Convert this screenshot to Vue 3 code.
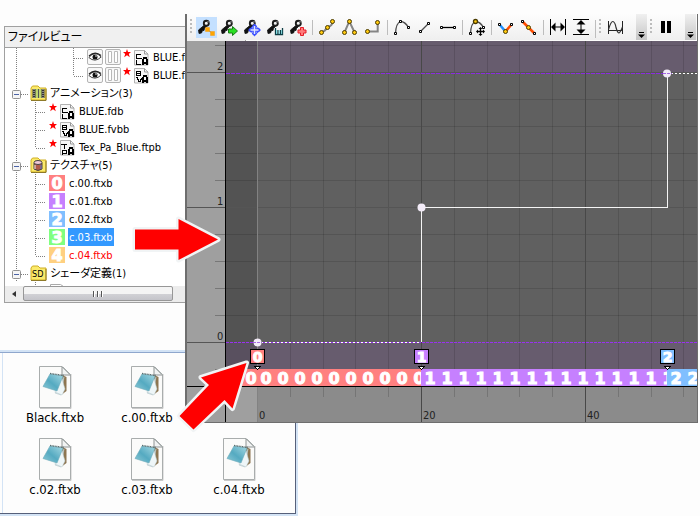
<script setup>
import { computed, onBeforeUnmount, onMounted, ref } from 'vue'

const treeRows = [
  { kind: 'deep', icon: 'C', label: 'BLUE.fdb' },
  { kind: 'deep', icon: 'V', last: true, label: 'BLUE.fvbb' },
  { kind: 'folder', icon: 'film', label: 'アニメーション(3)' },
  { kind: 'child', icon: 'C', label: 'BLUE.fdb' },
  { kind: 'child', icon: 'V', label: 'BLUE.fvbb' },
  { kind: 'child', icon: 'T', last: true, label: 'Tex_Pa_Blue.ftpb' },
  { kind: 'folder', icon: 'can', label: 'テクスチャ(5)' },
  { kind: 'child', digit: 0, label: 'c.00.ftxb' },
  { kind: 'child', digit: 1, label: 'c.01.ftxb' },
  { kind: 'child', digit: 2, label: 'c.02.ftxb' },
  { kind: 'child', digit: 3, label: 'c.03.ftxb', selected: true },
  { kind: 'child', digit: 4, last: true, missing: true, label: 'c.04.ftxb' },
  { kind: 'folder', icon: 'sd', label: 'シェーダ定義(1)' }
]
const guideWidth = { deep: 81, folder: 24, child: 43 }
const tileColors = ['#ff8080', '#c680ff', '#80bfff', '#80ff80', '#ffd080']

const files = ['Black.ftxb', 'c.00.ftxb', 'c.02.ftxb', 'c.03.ftxb', 'c.04.ftxb']

const keyTools = ['Insert key', 'Shift key', 'Move key', 'Scale key', 'Add key']
const slots = [
  ['Smooth', 'Linear', 'Step'],
  ['Ease', 'Slope', 'Flat'],
  ['Move tangent'],
  ['Break', 'Unify'],
  ['Fit width', 'Fit height']
]

/* chart geometry: frame 0 and value 0 in chart pixels */
const frame0 = 70
const value0 = 301
const fx = (frame) => Math.round(frame0 + frame * 8.2) + 0.5
const vy = (value) => value0 - value * 135 + 0.5
const minorFrames = [4, 8, 12, 16, 24, 28, 32, 36, 44, 48, 52]
const majorFrames = [20, 40]
const minorValues = [-0.2, 0.2, 0.4, 0.6, 0.8, 1.2, 1.4, 1.6, 1.8, 2.2]
const keys = [
  { frame: 0, digit: 0 },
  { frame: 20, digit: 1 },
  { frame: 50, digit: 2 }
]

/* the last band runs on to the right edge of the chart */
const chart = ref(null)
const chartWidth = ref(510)
const measure = () => { chartWidth.value = chart.value.clientWidth || 510 }
onMounted(() => {
  measure()
  window.addEventListener('resize', measure)
})
onBeforeUnmount(() => window.removeEventListener('resize', measure))
const bands = computed(() => [
  { x: 39, digit: 0, offset: 8, count: 2 },
  { x: 70, digit: 0, offset: 9, count: 10 },
  { x: 234, digit: 1, offset: 9, count: 15 },
  { x: 480, digit: 2, offset: 9, count: Math.max(0, Math.ceil((chartWidth.value - 480) / 17)) }
])
</script>

<template>
  <main class="desk">
    <section class="explorer" aria-label="Files">
      <ul class="files">
        <li v-for="f in files" :key="f" class="file">
          <svg width="34" height="43" viewBox="0 0 34 43" aria-hidden="true">
            <defs>
              <linearGradient id="pad" x1="0" y1="1" x2="1" y2="0">
                <stop offset="0" stop-color="#8fcbd8" /><stop offset=".45" stop-color="#55aac1" /><stop offset="1" stop-color="#a8dae4" />
              </linearGradient>
            </defs>
            <path d="M2 42.500h31V8" fill="none" stroke="#c9c9c9" />
            <path d="M1.500.5H24L32.500 9V41.500H1.500z" fill="#fbfbfa" stroke="#a9adad" />
            <path d="M24 .5V9h8.500" fill="#f1f3f3" stroke="#8f9494" />
            <path d="M24.500 1L32 8.500" stroke="#77807f" />
            <path d="M24 9l4.500 2v14l-4 3z" fill="#8d7550" />
            <path d="M26 11l-3 18-6-2z" fill="#d9e8ec" stroke="#b5c6ca" stroke-width=".6" />
            <path d="M23.500 11l3.500 12-3 6-7-3z" fill="#eef6f8" stroke="#b5c6ca" stroke-width=".5" />
            <path d="M12 8l13 2-6 15L5 20.500z" fill="url(#pad)" stroke="#6ba9b8" stroke-width=".6" />
            <path d="M12 7.500l14 2" stroke="#596b6d" stroke-width="1.400" stroke-dasharray="1 .6" />
          </svg>
          <span>{{ f }}</span>
        </li>
      </ul>
    </section>

    <section class="tree-panel">
      <h2>ファイルビュー</h2>
      <ul class="tree">
        <li v-for="(r, i) in treeRows" :key="i" class="row">
          <svg class="guide" :width="guideWidth[r.kind]" height="18" aria-hidden="true">
            <g stroke="#808080" stroke-dasharray="1 1" shape-rendering="crispEdges">
              <path d="M11.500 0V18" />
              <path v-if="r.kind === 'deep'" :d="r.last ? 'M68.500 0V10' : 'M68.500 0V18'" />
              <path v-if="r.kind === 'deep'" d="M69 10.500H79" />
              <path v-if="r.kind === 'child'" :d="r.last ? 'M30.500 0V10' : 'M30.500 0V18'" />
              <path v-if="r.kind === 'child'" d="M31 10.500H41" />
              <path v-if="r.kind === 'folder'" d="M16 10.500H23" />
            </g>
            <g v-if="r.kind === 'folder'">
              <rect x="7.500" y="6.500" width="8" height="8" rx="1" fill="#f5f5f5" stroke="#919191" />
              <path d="M9 10.500H14" stroke="#4b63a7" />
            </g>
          </svg>

          <template v-if="r.kind === 'deep'">
            <button class="mini" aria-label="Show">
              <svg width="14" height="12" viewBox="0 0 14 12">
                <path d="M.8 6.500Q7-1 13.200 6Q7 12 .8 6.500z" fill="#fff" stroke="#333" stroke-width=".9" />
                <circle cx="7" cy="6" r="2.500" fill="#111" /><path d="M1 5Q7-.5 13 4.500" fill="none" stroke="#222" stroke-width="1.300" />
                <circle cx="8" cy="5" r=".8" fill="#fff" />
              </svg>
            </button>
            <button class="mini" aria-label="Pause">
              <svg width="12" height="12" viewBox="0 0 12 12">
                <path d="M1.500.5h3v11h-3zM7.500.5h3v11h-3z" fill="#fff" stroke="#b9b9b9" />
              </svg>
            </button>
          </template>

          <svg v-if="['C', 'V', 'T'].includes(r.icon)" class="marked" width="27" height="18" viewBox="0 0 27 18" aria-hidden="true">
            <path d="M5 1l1 3h3L6.800 6l1 3.200L5 7.200 2.200 9.200l1-3.200L1 4h3z" fill="#f00" />
            <path d="M12.500 2.500h10l3.500 3.500v11H12.500z" fill="#f7f7f7" stroke="#b2b2b2" />
            <path d="M22.500 2.500V6H26" fill="none" stroke="#999" />
            <g fill="none" stroke="#000" shape-rendering="crispEdges">
              <path v-if="r.icon === 'C'" d="M19 6.500h-4.500v4H20M14.500 12v4.500H19M14.500 13.500" />
              <path v-if="r.icon === 'V'" d="M14.500 5.500h4v4h-4zM14.500 7.500h4M14 11.500h1v2h1v2h2v-2h1v-2" />
              <path v-if="r.icon === 'T'" d="M13 6.500h6M16.500 6v5M14.500 17v-5h4v3h-4" />
              <path d="M21 17v-6M24.500 17v-6M21 14.500h4" stroke-width="2" />
              <path d="M21 9.500h4" stroke-width="2" />
            </g>
          </svg>

          <svg v-if="r.kind === 'folder'" class="folder" width="17" height="16" viewBox="0 0 17 16" aria-hidden="true">
            <path d="M1 15V3l1.500-2H8l2 2h6v12z" fill="#fbea6b" stroke="#cfae24" />
            <path d="M1 15.500h15V4" fill="none" stroke="#8e7a29" />
            <g v-if="r.icon === 'film'">
              <path d="M3 4h11v9H3z" fill="#bed66f" /><path d="M4 4v9M13 4v9" stroke="#333" stroke-width="3" /><path d="M4 4v9M13 4v9" stroke="#ddd" stroke-dasharray="1 1" /><path d="M8.500 4v9" stroke="#555" />
            </g>
            <g v-if="r.icon === 'can'">
              <path d="M4 6v6q4 3 8 0V6z" fill="#b05b4b" stroke="#444" /><ellipse cx="8" cy="5.500" rx="4" ry="2" fill="#f1c9d8" stroke="#444" /><path d="M5 8v4" stroke="#eee" /><path d="M11 8v4" stroke="#5a74c8" />
            </g>
            <text v-if="r.icon === 'sd'" x="2" y="12" class="sd">SD</text>
          </svg>

          <svg v-if="r.digit !== undefined" class="tile" width="16" height="16" aria-hidden="true">
            <rect width="16" height="16" :fill="tileColors[r.digit]" />
            <text x="8" y="14" class="digit">{{ r.digit }}</text>
          </svg>

          <span class="label" :class="{ selected: r.selected, missing: r.missing }">{{ r.label }}</span>
        </li>
        <li class="row stub" aria-hidden="true">
          <svg width="66" height="4"><path d="M30.500 0v4" stroke="#808080" stroke-dasharray="1 1" /><path d="M45.500 4V2.500h10l3 2" fill="none" stroke="#aaa" /></svg>
        </li>
      </ul>
      <div class="scroll">
        <button class="step" aria-label="Scroll left">
          <svg width="4" height="6" viewBox="0 0 4 6"><path d="M4 0v6L0 3z" fill="#333" /></svg>
        </button>
        <button class="thumb" aria-label="Scroll position"><i></i><i></i><i></i></button>
      </div>
    </section>

    <section class="editor" aria-label="Curve editor">
      <div class="toolbar">
        <span class="grip lead"></span>
        <button v-for="(t, i) in keyTools" :key="t" class="tool" :class="{ active: i === 0 }" :aria-label="t">
          <svg width="23" height="24" viewBox="0 0 23 24">
            <path d="M9.500 9L3.500 14l.5 3.500 2.500-.5 1-2.500 1.500 0 .5-2 2-2z" fill="#111" stroke="#111" stroke-width=".8" />
            <circle cx="11.300" cy="7.300" r="2.500" fill="#f2f2f2" stroke="#1c1c1c" stroke-width="1.900" />
            <path d="M12.500 5l1.500 1.500" stroke="#aaa" />
            <g v-if="i === 0"><path d="M12 13l6 5" stroke="#777" /><path d="M10.500 11.500h4v4h-4zM15.500 15.500h4v4h-4z" fill="#ffa500" stroke="#f39a12" stroke-width=".5" /></g>
            <path v-if="i === 1" d="M10.500 13h4v-2.500l5 4.500-5 4.500V17h-4z" fill="#2adf22" stroke="#187a16" />
            <g v-if="i === 2">
              <path d="M13.500 9v10M8.500 14h10" stroke="#3b4fff" stroke-width="3.500" /><path d="M13.500 7.500l3.500 4h-7zM13.500 20.500l3.500-4h-7zM7 14l4-3.500v7zM20 14l-4-3.500v7z" fill="#3b4fff" />
              <path d="M13.500 10v8M9.500 14h8" stroke="#dfe5ff" stroke-width="1.500" />
            </g>
            <g v-if="i === 3"><path d="M11.500 12v6.500h7V12M14 14v4M16.500 14v4" fill="none" stroke="#0d3d44" stroke-width="1.300" /><path d="M12.500 14v4M15.200 14v4M17.700 14v4" stroke="#5fe0e8" stroke-width=".7" /></g>
            <path v-if="i === 4" d="M13.500 11.500h3v2.500h2.500v3h-2.500v2.500h-3V17H11v-3h2.500z" fill="#ff7b7b" stroke="#e51d28" />
          </svg>
        </button>
        <template v-for="(group, g) in slots" :key="g">
          <span class="sep"></span>
          <button v-for="(t, i) in group" :key="t" class="tool" :aria-label="t">
            <svg width="23" height="24" viewBox="0 0 23 24" fill="none">
              <g v-if="g === 0" stroke="#858585" stroke-width="2">
                <path v-if="i === 0" d="M5.500 16.300Q9 15.500 11.300 11.300Q16.500 10 16.700 5.300" />
                <path v-if="i === 1" d="M5.500 16.300L10.300 5.300L15.500 16.300" />
                <path v-if="i === 2" d="M5.500 15.500H15.700V6.300" />
                <g fill="#ffc90e" stroke="#4a3b00" stroke-width="1">
                  <template v-if="i === 0"><circle cx="5.500" cy="16.500" r="2" /><circle cx="11.500" cy="11.500" r="2" /><circle cx="16.500" cy="5.500" r="2" /></template>
                  <template v-if="i === 1"><circle cx="5.500" cy="16.500" r="2" /><circle cx="10.500" cy="5.500" r="2" /><circle cx="15.500" cy="16.500" r="2" /></template>
                  <template v-if="i === 2"><circle cx="5.500" cy="15.500" r="2" /><circle cx="15.500" cy="6.500" r="2" /></template>
                </g>
              </g>
              <g v-if="g === 1 || g === 2" stroke="#4c4c4c" stroke-width="1.300">
                <path v-if="i === 0" d="M4.500 17.500Q5 7 9.500 5.500Q14 5.500 17.500 11.500" />
                <path v-if="i === 1" d="M6.500 15.500L14.500 7.500" />
                <path v-if="i === 2" d="M4.500 11.500H17.500" stroke="#000" />
                <g fill="#fff" stroke="#000" stroke-width="1">
                  <path v-if="i === 0" d="M3.500 16.500h2v2h-2zM8.500 4.500h2v2h-2zM16.500 10.500h2v2h-2z" />
                  <path v-if="i === 1" d="M5.500 14.500h2v2h-2zM13.500 6.500h2v2h-2z" />
                  <path v-if="i === 2" d="M3.500 10.500h2v2h-2zM16.500 10.500h2v2h-2z" />
                </g>
                <g v-if="g === 2">
                  <circle cx="9.500" cy="5.500" r="2" fill="#ffc90e" stroke="#4a3b00" />
                  <path d="M14.500 12v7M11 15.500h7" stroke="#000" /><path d="M14.500 11l2 2h-4zM14.500 20l2-2h-4zM10 15.500l2-2v4zM19 15.500l-2-2v4z" fill="#000" stroke="none" />
                </g>
              </g>
              <g v-if="g === 3">
                <template v-if="i === 0">
                  <path d="M4.500 8.500L10.500 15.500" stroke="#1e90ff" stroke-width="2.500" /><path d="M16.500 8.500L10.500 15.500" stroke="#ff4d00" stroke-width="2.500" />
                  <path d="M3.500 7.500h2v2h-2zM15.500 7.500h2v2h-2z" fill="#fff" stroke="#000" /><circle cx="10.500" cy="15.500" r="2" fill="#ffc90e" stroke="#4a3b00" />
                </template>
                <template v-else>
                  <path d="M4.500 5.500L16.500 17.500" stroke="#ff4d00" stroke-width="2.500" />
                  <path d="M3.500 4.500h2v2h-2zM15.500 16.500h2v2h-2z" fill="#fff" stroke="#000" /><circle cx="10.500" cy="11.500" r="2" fill="#ffc90e" stroke="#4a3b00" />
                </template>
              </g>
              <g v-if="g === 4">
                <path v-if="i === 0" d="M3.500 3v16M18.500 3v16M5 11h12" stroke="#000" />
                <path v-if="i === 0" d="M4 11l4.500-4.500v9zM18 11l-4.500-4.500v9z" fill="#000" />
                <path v-if="i === 1" d="M3 3.500h16M3 18.500h16M11 5v12" stroke="#000" />
                <path v-if="i === 1" d="M11 4L6.500 8.500h9zM11 18L6.500 13.500h9z" fill="#000" />
              </g>
            </svg>
          </button>
        </template>
        <span class="sep end"></span>
        <span class="grip"></span>
        <button class="tool" aria-label="Curve view">
          <svg width="23" height="24" viewBox="0 0 23 24" fill="none">
            <path d="M5.500 5v13M19.500 5v13M5.500 14.500h14" stroke="#222" /><path d="M5.500 13.500Q8 5 10 5.500Q12 6 13 11.500Q15 19 17 16Q18.500 14 19.500 11" stroke="#333" stroke-width="1.200" />
          </svg>
        </button>
        <button class="more" aria-label="More curve tools"><svg width="11" height="26"><path d="M3 18.500h5" stroke="#000" /><path d="M2 20.500h7L5.500 24z" fill="#000" /></svg></button>
        <span class="grip"></span>
        <button class="tool" aria-label="Pause playback">
          <svg width="23" height="24" viewBox="0 0 23 24"><path d="M7 5h4v12H7zM13 5h4v12h-4z" fill="#000" /></svg>
        </button>
        <button class="more far" aria-label="More playback tools"><svg width="11" height="26"><path d="M3 18.500h5" stroke="#000" /><path d="M2 20.500h7L5.500 24z" fill="#000" /></svg></button>
      </div>

      <div ref="chart">
        <svg class="chart" width="100%" height="381" shape-rendering="crispEdges" role="img" aria-label="Texture pattern curve">
          <rect width="100%" height="381" fill="#606060" />
          <rect width="100%" height="31" fill="#675c6e" />
          <rect y="301" width="100%" height="28" fill="#675c6e" />
          <rect x="38" width="32" height="346" fill="#000" fill-opacity=".13" />
          <rect y="346" width="100%" height="35" fill="#8b8b8b" />
          <rect width="38" height="381" fill="#9f9f9f" />
          <rect y="346" width="70" height="35" fill="#9f9f9f" />

          <g stroke="#000" stroke-opacity=".12">
            <path v-for="f in minorFrames" :key="f" :d="`M${fx(f)} 0V346`" />
            <path v-for="v in minorValues" :key="v" :d="`M39 ${vy(v)}H4000`" />
          </g>
          <g stroke="#484848">
            <path v-for="f in majorFrames" :key="f" :d="`M${fx(f)} 0V381`" />
            <path d="M0 31.500H4000M0 166.500H4000M0 301.500H39" stroke="#555" />
          </g>
          <path d="M70.500 0V381" stroke="#828282" />
          <path v-for="f in minorFrames" :key="'t' + f" :d="`M${fx(f)} 346v10`" stroke="#757575" />
          <path v-for="v in minorValues" :key="'v' + v" :d="`M28 ${vy(v)}h10`" stroke="#777" />

          <path d="M39 32.500H480" stroke="#8a2be2" stroke-dasharray="4 1" />
          <path d="M39 301.500H4000" stroke="#9932f0" stroke-dasharray="3 1" />
          <path d="M70 301.500H234M480 32.500H4000" stroke="#fff" stroke-dasharray="2 2" />
          <path d="M234.500 301V166.500H480.500V32" fill="none" stroke="#f4f4f4" />

          <g v-for="b in bands" :key="b.x" :transform="`translate(${b.x} 328)`">
            <rect width="100%" height="17" :fill="tileColors[b.digit]" />
            <text v-for="n in b.count" :key="n" :x="(n - 1) * 17 + b.offset" y="15" class="digit band">{{ b.digit }}</text>
          </g>
          <path d="M0 345.500H4000" stroke="#000" />
          <path d="M38.500 0V381" stroke="#000" />

          <g v-for="k in keys" :key="k.frame" :transform="`translate(${fx(k.frame)} 308)`">
            <rect x="-7" y=".5" width="14" height="14" :fill="tileColors[k.digit]" stroke="#000" />
            <text x="0" y="13" class="digit key">{{ k.digit }}</text>
            <path d="M-4 16.500h8L0 21z" fill="#000" /><path d="M-2 17.500h4L0 20z" fill="#fff" />
          </g>
          <g fill="#f3ecf8" shape-rendering="auto">
            <circle cx="70.500" cy="301.500" r="4" /><circle cx="234.500" cy="166.500" r="4" /><circle cx="480" cy="32.500" r="4" />
          </g>
          <path d="M66 301.500h9M476 32.500h9" stroke="#a46be0" stroke-dasharray="3 1" />

          <g class="axis">
            <text x="30" y="29">2</text>
            <text x="30" y="164">1</text>
            <text x="30" y="299">0</text>
            <text x="72" y="378">0</text>
            <text x="236" y="378">20</text>
            <text x="400" y="378">40</text>
          </g>
        </svg>
      </div>
    </section>

    <svg class="arrows" width="260" height="440" aria-hidden="true">
      <g fill="#f00" stroke="#f1f4f5" stroke-width="5" stroke-linejoin="round" paint-order="stroke">
        <path d="M135 229.500h43.500v-10.500L218 239.500L178.500 260v-10.500H135z" />
        <path d="M246.500 363L201 377.500L209 385L179.500 416L193.500 429.500L224.500 400L232.500 408.500z" />
      </g>
    </svg>
  </main>
</template>

<style>
body {
  margin: 0;
  background: #fdfdfd;
}
</style>

<style scoped>
.desk {
  position: relative;
  min-height: 100vh;
  overflow: hidden;
  font-family: "DejaVu Sans Condensed", "Noto Sans CJK JP", sans-serif;
  font-size: 11px;
  color: #000;
}
button {
  margin: 0;
  padding: 0;
  border: 0;
  background: none;
  font: inherit;
}
svg {
  display: block;
  flex: none;
}
ul {
  margin: 0;
  padding: 0;
  list-style: none;
}

.explorer {
  position: absolute;
  left: 0;
  top: 350px;
  border: solid #d3e3f5;
  border-width: 2px 2px 2px 0;
}
.files {
  display: grid;
  grid-template-columns: repeat(3, 92px);
  padding: 13px 10px 3px 9px;
  border: solid #56607a;
  border-width: 1px 1px 1px 0;
  border-top-color: #8fa7cd;
  background: linear-gradient(#d3e3f5, #d3e3f5) 2px 0 / 1px 100% no-repeat;
}
.file {
  display: flex;
  flex-direction: column;
  align-items: center;
  gap: 1px;
  height: 72px;
  font-size: 13px;
  line-height: 16px;
}
.file:nth-child(3) {
  grid-column: 1;
}

.tree-panel {
  position: absolute;
  left: 4px;
  top: 26px;
  width: 240px;
  border: 1px solid #a0a0a0;
  background: #fff;
}
.tree-panel h2 {
  margin: 0;
  padding: 0 3px;
  border-bottom: 1px solid #a0a0a0;
  background: #f0f0f0;
  font-size: 11px;
  font-weight: 400;
  line-height: 20px;
}
.row {
  display: flex;
  align-items: center;
  height: 18px;
  font-feature-settings: "palt" 1;
}
.tree-panel h2 {
  font-size: 12px;
  font-feature-settings: "palt" 1;
}
.stub {
  height: 4px;
  align-items: flex-start;
}
.label {
  height: 18px;
  padding: 0 1px;
  line-height: 20px;
  white-space: nowrap;
}
.selected {
  background: #3399ff;
  color: #fff;
}
.missing {
  color: #f00;
}
.mini {
  display: flex;
  align-items: center;
  justify-content: center;
  box-sizing: border-box;
  width: 16px;
  height: 16px;
  margin: 0 1px;
  border: 1px solid #b4b4b4;
  border-radius: 2px;
  background: #f8f8f8;
}
.marked {
  margin: 0 3px 0 0;
}
.folder {
  margin: 0 2px 0 1px;
}
.tile {
  margin: 0 3px 0 1px;
  overflow: visible;
}
.sd {
  font: 9px "DejaVu Sans Condensed", sans-serif;
}
.digit {
  font: bold 16px "DejaVu Sans", sans-serif;
  fill: #fff;
  stroke: #fff;
  stroke-width: 1px;
  text-anchor: middle;
}
.key {
  font-size: 14px;
}
.scroll {
  display: flex;
  height: 16px;
  background: #ececec;
}
.step {
  display: flex;
  align-items: center;
  justify-content: center;
  width: 18px;
}
.thumb {
  display: flex;
  align-items: center;
  justify-content: center;
  gap: 2px;
  box-sizing: border-box;
  width: 150px;
  height: 15px;
  border: 1px solid #979797;
  border-radius: 2px;
  background: linear-gradient(#f4f4f4 50%, #d2d2d6 50%, #c4c4ca);
}
.thumb i {
  width: 1px;
  height: 6px;
  border-right: 1px solid #fff;
  background: #555;
}

.editor {
  position: absolute;
  left: 185px;
  right: 2px;
  top: 14px;
  border: solid #6e6e6e;
  border-width: 0 1px 1px 2px;
}
.toolbar {
  display: flex;
  height: 26px;
  margin-bottom: 1px;
  overflow: hidden;
  background: linear-gradient(#fdfdfd, #efefef);
}
.tool {
  display: flex;
  flex: none;
  width: 23px;
  height: 24px;
  margin-top: 2px;
}
.active {
  background: linear-gradient(#c4e0ff, #c4e0ff) 1px 1px / 21px 21px no-repeat;
}
.sep {
  flex: none;
  width: 1px;
  height: 15px;
  margin: 6px 3px 0 2px;
  background: #bdbdbd;
}
.end {
  height: 18px;
  margin-right: 0;
}
.grip {
  flex: none;
  width: 2px;
  height: 15px;
  margin: 5px 2px 0 3px;
  background: repeating-linear-gradient(#bcbcbc 0 2px, transparent 2px 4px);
}
.lead {
  margin: 5px 3px 0 3px;
}
.more {
  flex: none;
  width: 11px;
  height: 26px;
  margin-left: 10px;
  background: linear-gradient(#f0f0f0, #c6c6c6);
}
.far {
  margin-left: 8px;
}
.chart {
  overflow: hidden;
}
.axis {
  font: 11px "DejaVu Sans Condensed", sans-serif;
  fill: #222;
}
.arrows {
  position: absolute;
  left: 0;
  top: 0;
  pointer-events: none;
}
</style>
